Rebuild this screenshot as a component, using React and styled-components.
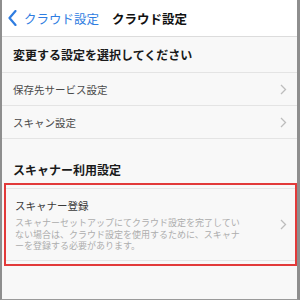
import React from "react";
import styled, { createGlobalStyle } from "styled-components";

const Global = createGlobalStyle`
  html, body { margin: 0; padding: 0; background: #fff; }
  body { font-family: "Noto Sans CJK JP", "Noto Sans", sans-serif; }
`;

const Frame = styled.div`
  width: 300px;
  height: 300px;
  box-sizing: border-box;
  border-left: 2px solid #8e8e8e;
  border-right: 3px solid #8e8e8e;
  border-bottom: 1px solid #9a9a9a;
  background: #f8f8f8;
  display: flex;
  flex-direction: column;
  overflow: hidden;
`;

const NavBar = styled.div`
  height: 37px;
  box-sizing: border-box;
  background: #fff;
  border-bottom: 1px solid #dcdcdc;
  display: flex;
  align-items: center;
  padding-left: 6px;
`;

const BackButton = styled.div`
  display: flex;
  align-items: center;
  gap: 7px;
  color: #2f7de1;
  font-size: 12.5px;
  margin-right: 13px;
`;

const NavTitle = styled.div`
  font-size: 12.5px;
  font-weight: 700;
  color: #111;
`;

const SectionHeader = styled.div`
  height: ${(p) => p.$h}px;
  box-sizing: border-box;
  display: flex;
  align-items: ${(p) => (p.$bottom ? "flex-end" : "center")};
  padding: 0 0 ${(p) => (p.$bottom ? "5px" : "0")} 11px;
  font-size: 12px;
  font-weight: 700;
  color: #1a1a1a;
  border-bottom: ${(p) => (p.$line ? "1px solid #e4e4e4" : "none")};
`;

const Row = styled.div`
  height: 33px;
  box-sizing: border-box;
  display: flex;
  align-items: center;
  justify-content: space-between;
  padding: 0 10px 0 11px;
  border-bottom: 1px solid #e4e4e4;
  font-size: 10.5px;
  color: #4a4a4a;
`;

const Highlight = styled.div`
  margin: 0 0 0 2px;
  border: 2px solid #e23a3a;
  padding: 3px 0 3px;
`;

const DetailRow = styled.div`
  display: flex;
  align-items: center;
  justify-content: space-between;
  border-top: 1px solid #e6e6e6;
  border-bottom: 1px solid #e6e6e6;
  padding: 9px 8px 8px 9px;
`;

const DetailText = styled.div`
  display: flex;
  flex-direction: column;
  gap: 4px;
`;

const DetailTitle = styled.div`
  font-size: 10.5px;
  line-height: 15px;
  color: #3a3a3a;
`;

const DetailDesc = styled.div`
  font-size: 9px;
  line-height: 11.5px;
  color: #adadad;
  white-space: nowrap;
`;

const Chevron = () => (
  <svg width="7" height="11" viewBox="0 0 7 11">
    <path d="M1 1 L5.5 5.5 L1 10" fill="none" stroke="#bdbdbd" strokeWidth="1.3" />
  </svg>
);

const BackChevron = () => (
  <svg width="9" height="16" viewBox="0 0 9 16">
    <path d="M7.5 1 L1.5 8 L7.5 15" fill="none" stroke="#2f7de1" strokeWidth="2.2" strokeLinecap="round" strokeLinejoin="round" />
  </svg>
);

export default function App() {
  return (
    <>
      <Global />
      <Frame>
        <NavBar>
          <BackButton>
            <BackChevron />
            <span>クラウド設定</span>
          </BackButton>
          <NavTitle>クラウド設定</NavTitle>
        </NavBar>
        <SectionHeader $h={36} $line>変更する設定を選択してください</SectionHeader>
        <Row>
          <span>保存先サービス設定</span>
          <Chevron />
        </Row>
        <Row>
          <span>スキャン設定</span>
          <Chevron />
        </Row>
        <SectionHeader $h={44} $bottom>スキャナー利用設定</SectionHeader>
        <Highlight>
          <DetailRow>
            <DetailText>
              <DetailTitle>スキャナー登録</DetailTitle>
              <DetailDesc>
                スキャナーセットアップにてクラウド設定を完了してい
                <br />
                ない場合は、クラウド設定を使用するために、スキャナ
                <br />
                ーを登録する必要があります。
              </DetailDesc>
            </DetailText>
            <Chevron />
          </DetailRow>
        </Highlight>
      </Frame>
    </>
  );
}
